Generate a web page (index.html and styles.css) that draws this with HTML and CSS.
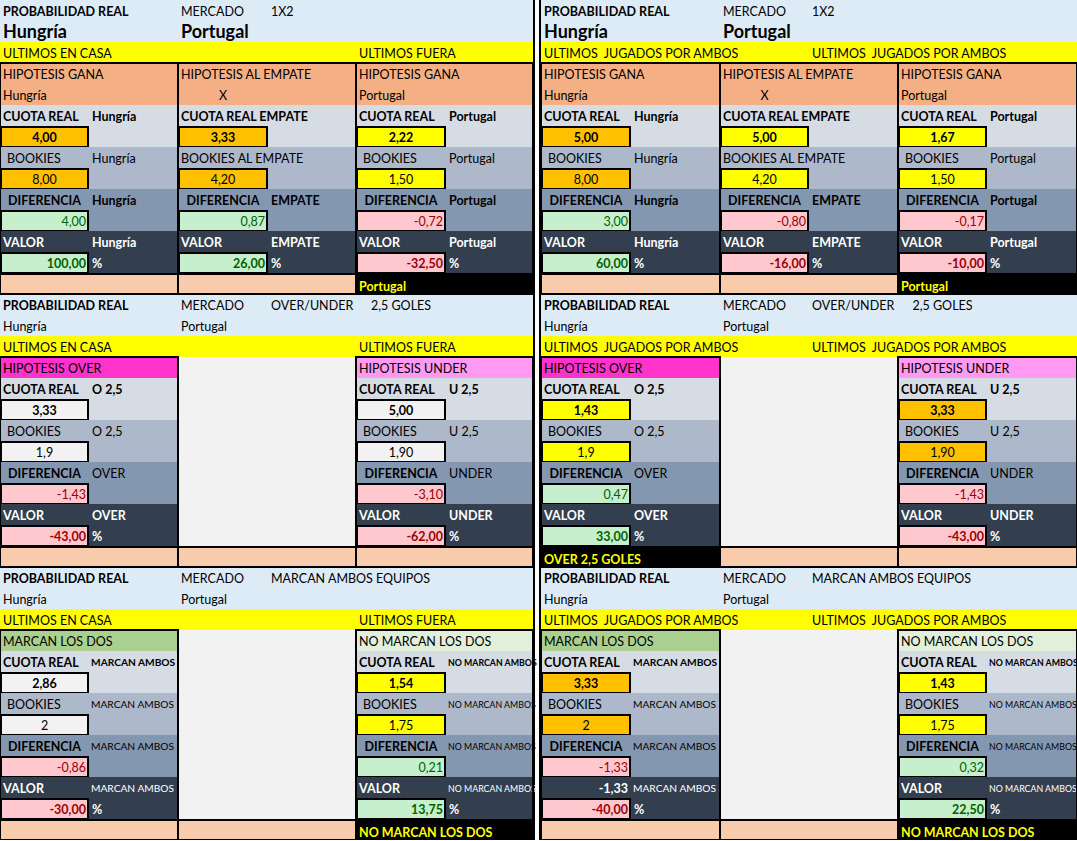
FILE: index.html
```html
<!DOCTYPE html>
<html lang="es">
<head>
<meta charset="utf-8">
<title>Probabilidad real</title>
<link rel="stylesheet" href="styles.css">
</head>
<body>
<div class="sheet">
<div class="half left">

<section class="sec">
<div class="line hdr"><span class="ca b">PROBABILIDAD REAL</span><span class="cc">MERCADO</span><span class="cd">1X2</span></div>
<div class="line hdr"><span class="ca big">Hungría</span><span class="cc big">Portugal</span></div>
<div class="line ylw"><span class="ca">ULTIMOS EN CASA</span><span class="ce">ULTIMOS FUERA</span></div>
<div class="blocks">
<div class="blk k1">
<div class="r hip"><span>HIPOTESIS GANA</span><span></span></div>
<div class="r hip"><span>Hungría</span><span></span></div>
<div class="r cu"><span class="b">CUOTA REAL</span><span class="b">Hungría</span></div>
<div class="r cu"><span class="box org b ctr">4,00</span><span></span></div>
<div class="r bk"><span class="ind">BOOKIES</span><span>Hungría</span></div>
<div class="r bk"><span class="box org ctr">8,00</span><span></span></div>
<div class="r df"><span class="b ctr">DIFERENCIA</span><span class="b">Hungría</span></div>
<div class="r df"><span class="box good rt">4,00</span><span></span></div>
<div class="r vl"><span class="b">VALOR</span><span class="b">Hungría</span></div>
<div class="r vl"><span class="box good rt b">100,00</span><span class="b">%</span></div>
<div class="r res"></div>
</div>
<div class="blk k2">
<div class="r hip"><span>HIPOTESIS AL EMPATE</span><span></span></div>
<div class="r hip"><span class="ctr">X</span><span></span></div>
<div class="r cu"><span class="b">CUOTA REAL EMPATE</span><span></span></div>
<div class="r cu"><span class="box org b ctr">3,33</span><span></span></div>
<div class="r bk"><span>BOOKIES AL EMPATE</span><span></span></div>
<div class="r bk"><span class="box org ctr">4,20</span><span></span></div>
<div class="r df"><span class="b ctr">DIFERENCIA</span><span class="b">EMPATE</span></div>
<div class="r df"><span class="box good rt">0,87</span><span></span></div>
<div class="r vl"><span class="b">VALOR</span><span class="b">EMPATE</span></div>
<div class="r vl"><span class="box good rt b">26,00</span><span class="b">%</span></div>
<div class="r res"></div>
</div>
<div class="blk k3">
<div class="r hip"><span>HIPOTESIS GANA</span><span></span></div>
<div class="r hip"><span>Portugal</span><span></span></div>
<div class="r cu"><span class="b">CUOTA REAL</span><span class="b">Portugal</span></div>
<div class="r cu"><span class="box yel b ctr">2,22</span><span></span></div>
<div class="r bk"><span class="ind">BOOKIES</span><span>Portugal</span></div>
<div class="r bk"><span class="box yel ctr">1,50</span><span></span></div>
<div class="r df"><span class="b ctr">DIFERENCIA</span><span class="b">Portugal</span></div>
<div class="r df"><span class="box bad rt">-0,72</span><span></span></div>
<div class="r vl"><span class="b">VALOR</span><span class="b">Portugal</span></div>
<div class="r vl"><span class="box bad rt b">-32,50</span><span class="b">%</span></div>
<div class="r win"><span class="b">Portugal</span><span></span></div>
</div>
</div>
</section>

<section class="sec">
<div class="line hdr"><span class="ca b">PROBABILIDAD REAL</span><span class="cc">MERCADO</span><span class="cd">OVER/UNDER</span><span class="ce ctr">2,5 GOLES</span></div>
<div class="line hdr"><span class="ca">Hungría</span><span class="cc">Portugal</span></div>
<div class="line ylw"><span class="ca">ULTIMOS EN CASA</span><span class="ce">ULTIMOS FUERA</span></div>
<div class="blocks">
<div class="blk k1">
<div class="r ov"><span>HIPOTESIS OVER</span><span></span></div>
<div class="r cu"><span class="b">CUOTA REAL</span><span class="b">O 2,5</span></div>
<div class="r cu"><span class="box wht b ctr">3,33</span><span></span></div>
<div class="r bk"><span class="ind">BOOKIES</span><span>O 2,5</span></div>
<div class="r bk"><span class="box wht ctr">1,9</span><span></span></div>
<div class="r df"><span class="b ctr">DIFERENCIA</span><span>OVER</span></div>
<div class="r df"><span class="box bad rt">-1,43</span><span></span></div>
<div class="r vl"><span class="b">VALOR</span><span class="b">OVER</span></div>
<div class="r vl"><span class="box bad rt b">-43,00</span><span class="b">%</span></div>
<div class="r res"></div>
</div>
<div class="blk k2 open">
<div class="fill"></div>
<div class="r res"></div>
</div>
<div class="blk k3">
<div class="r un"><span>HIPOTESIS UNDER</span><span></span></div>
<div class="r cu"><span class="b">CUOTA REAL</span><span class="b">U 2,5</span></div>
<div class="r cu"><span class="box wht b ctr">5,00</span><span></span></div>
<div class="r bk"><span class="ind">BOOKIES</span><span>U 2,5</span></div>
<div class="r bk"><span class="box wht ctr">1,90</span><span></span></div>
<div class="r df"><span class="b ctr">DIFERENCIA</span><span>UNDER</span></div>
<div class="r df"><span class="box bad rt">-3,10</span><span></span></div>
<div class="r vl"><span class="b">VALOR</span><span class="b">UNDER</span></div>
<div class="r vl"><span class="box bad rt b">-62,00</span><span class="b">%</span></div>
<div class="r res"></div>
</div>
</div>
</section>

<section class="sec">
<div class="line hdr"><span class="ca b">PROBABILIDAD REAL</span><span class="cc">MERCADO</span><span class="cd">MARCAN AMBOS EQUIPOS</span></div>
<div class="line hdr"><span class="ca">Hungría</span><span class="cc">Portugal</span></div>
<div class="line ylw"><span class="ca">ULTIMOS EN CASA</span><span class="ce">ULTIMOS FUERA</span></div>
<div class="blocks">
<div class="blk k1">
<div class="r mar"><span>MARCAN LOS DOS</span><span></span></div>
<div class="r cu"><span class="b">CUOTA REAL</span><span class="b sm">MARCAN AMBOS</span></div>
<div class="r cu"><span class="box wht b ctr">2,86</span><span></span></div>
<div class="r bk"><span class="ind">BOOKIES</span><span class="sm">MARCAN AMBOS</span></div>
<div class="r bk"><span class="box wht ctr">2</span><span></span></div>
<div class="r df"><span class="b ctr">DIFERENCIA</span><span class="sm">MARCAN AMBOS</span></div>
<div class="r df"><span class="box bad rt">-0,86</span><span></span></div>
<div class="r vl"><span class="b">VALOR</span><span class="sm">MARCAN AMBOS</span></div>
<div class="r vl"><span class="box bad rt b">-30,00</span><span class="b">%</span></div>
<div class="r res"></div>
</div>
<div class="blk k2 open">
<div class="fill"></div>
<div class="r res"></div>
</div>
<div class="blk k3">
<div class="r nomar"><span>NO MARCAN LOS DOS</span><span></span></div>
<div class="r cu"><span class="b">CUOTA REAL</span><span class="b xs">NO MARCAN AMBOS</span></div>
<div class="r cu"><span class="box yel b ctr">1,54</span><span></span></div>
<div class="r bk"><span class="ind">BOOKIES</span><span class="xs">NO MARCAN AMBOS</span></div>
<div class="r bk"><span class="box yel ctr">1,75</span><span></span></div>
<div class="r df"><span class="b ctr">DIFERENCIA</span><span class="xs">NO MARCAN AMBOS</span></div>
<div class="r df"><span class="box good rt">0,21</span><span></span></div>
<div class="r vl"><span class="b">VALOR</span><span class="xs">NO MARCAN AMBOS</span></div>
<div class="r vl"><span class="box good rt b">13,75</span><span class="b">%</span></div>
<div class="r win"><span class="b">NO MARCAN LOS DOS</span><span></span></div>
</div>
</div>
</section>

</div>
<div class="sep"></div>
<div class="half right">

<section class="sec">
<div class="line hdr"><span class="ca b">PROBABILIDAD REAL</span><span class="cc">MERCADO</span><span class="cd">1X2</span></div>
<div class="line hdr"><span class="ca big">Hungría</span><span class="cc big">Portugal</span></div>
<div class="line ylw"><span class="ca">ULTIMOS  JUGADOS POR AMBOS</span><span class="cd">ULTIMOS  JUGADOS POR AMBOS</span></div>
<div class="blocks">
<div class="blk k1">
<div class="r hip"><span>HIPOTESIS GANA</span><span></span></div>
<div class="r hip"><span>Hungría</span><span></span></div>
<div class="r cu"><span class="b">CUOTA REAL</span><span class="b">Hungría</span></div>
<div class="r cu"><span class="box org b ctr">5,00</span><span></span></div>
<div class="r bk"><span class="ind">BOOKIES</span><span>Hungría</span></div>
<div class="r bk"><span class="box org ctr">8,00</span><span></span></div>
<div class="r df"><span class="b ctr">DIFERENCIA</span><span class="b">Hungría</span></div>
<div class="r df"><span class="box good rt">3,00</span><span></span></div>
<div class="r vl"><span class="b">VALOR</span><span class="b">Hungría</span></div>
<div class="r vl"><span class="box good rt b">60,00</span><span class="b">%</span></div>
<div class="r res"></div>
</div>
<div class="blk k2">
<div class="r hip"><span>HIPOTESIS AL EMPATE</span><span></span></div>
<div class="r hip"><span class="ctr">X</span><span></span></div>
<div class="r cu"><span class="b">CUOTA REAL EMPATE</span><span></span></div>
<div class="r cu"><span class="box yel b ctr">5,00</span><span></span></div>
<div class="r bk"><span>BOOKIES AL EMPATE</span><span></span></div>
<div class="r bk"><span class="box yel ctr">4,20</span><span></span></div>
<div class="r df"><span class="b ctr">DIFERENCIA</span><span class="b">EMPATE</span></div>
<div class="r df"><span class="box bad rt">-0,80</span><span></span></div>
<div class="r vl"><span class="b">VALOR</span><span class="b">EMPATE</span></div>
<div class="r vl"><span class="box bad rt b">-16,00</span><span class="b">%</span></div>
<div class="r res"></div>
</div>
<div class="blk k3">
<div class="r hip"><span>HIPOTESIS GANA</span><span></span></div>
<div class="r hip"><span>Portugal</span><span></span></div>
<div class="r cu"><span class="b">CUOTA REAL</span><span class="b">Portugal</span></div>
<div class="r cu"><span class="box yel b ctr">1,67</span><span></span></div>
<div class="r bk"><span class="ind">BOOKIES</span><span>Portugal</span></div>
<div class="r bk"><span class="box yel ctr">1,50</span><span></span></div>
<div class="r df"><span class="b ctr">DIFERENCIA</span><span class="b">Portugal</span></div>
<div class="r df"><span class="box bad rt">-0,17</span><span></span></div>
<div class="r vl"><span class="b">VALOR</span><span class="b">Portugal</span></div>
<div class="r vl"><span class="box bad rt b">-10,00</span><span class="b">%</span></div>
<div class="r win"><span class="b">Portugal</span><span></span></div>
</div>
</div>
</section>

<section class="sec">
<div class="line hdr"><span class="ca b">PROBABILIDAD REAL</span><span class="cc">MERCADO</span><span class="cd">OVER/UNDER</span><span class="ce ctr">2,5 GOLES</span></div>
<div class="line hdr"><span class="ca">Hungría</span><span class="cc">Portugal</span></div>
<div class="line ylw"><span class="ca">ULTIMOS  JUGADOS POR AMBOS</span><span class="cd">ULTIMOS  JUGADOS POR AMBOS</span></div>
<div class="blocks">
<div class="blk k1">
<div class="r ov"><span>HIPOTESIS OVER</span><span></span></div>
<div class="r cu"><span class="b">CUOTA REAL</span><span class="b">O 2,5</span></div>
<div class="r cu"><span class="box yel b ctr">1,43</span><span></span></div>
<div class="r bk"><span class="ind">BOOKIES</span><span>O 2,5</span></div>
<div class="r bk"><span class="box yel ctr">1,9</span><span></span></div>
<div class="r df"><span class="b ctr">DIFERENCIA</span><span>OVER</span></div>
<div class="r df"><span class="box good rt">0,47</span><span></span></div>
<div class="r vl"><span class="b">VALOR</span><span class="b">OVER</span></div>
<div class="r vl"><span class="box good rt b">33,00</span><span class="b">%</span></div>
<div class="r win"><span class="b">OVER 2,5 GOLES</span><span></span></div>
</div>
<div class="blk k2 open">
<div class="fill"></div>
<div class="r res"></div>
</div>
<div class="blk k3">
<div class="r un"><span>HIPOTESIS UNDER</span><span></span></div>
<div class="r cu"><span class="b">CUOTA REAL</span><span class="b">U 2,5</span></div>
<div class="r cu"><span class="box org b ctr">3,33</span><span></span></div>
<div class="r bk"><span class="ind">BOOKIES</span><span>U 2,5</span></div>
<div class="r bk"><span class="box org ctr">1,90</span><span></span></div>
<div class="r df"><span class="b ctr">DIFERENCIA</span><span>UNDER</span></div>
<div class="r df"><span class="box bad rt">-1,43</span><span></span></div>
<div class="r vl"><span class="b">VALOR</span><span class="b">UNDER</span></div>
<div class="r vl"><span class="box bad rt b">-43,00</span><span class="b">%</span></div>
<div class="r res"></div>
</div>
</div>
</section>

<section class="sec">
<div class="line hdr"><span class="ca b">PROBABILIDAD REAL</span><span class="cc">MERCADO</span><span class="cd">MARCAN AMBOS EQUIPOS</span></div>
<div class="line hdr"><span class="ca">Hungría</span><span class="cc">Portugal</span></div>
<div class="line ylw"><span class="ca">ULTIMOS  JUGADOS POR AMBOS</span><span class="cd">ULTIMOS  JUGADOS POR AMBOS</span></div>
<div class="blocks">
<div class="blk k1">
<div class="r mar"><span>MARCAN LOS DOS</span><span></span></div>
<div class="r cu"><span class="b">CUOTA REAL</span><span class="b sm">MARCAN AMBOS</span></div>
<div class="r cu"><span class="box org b ctr">3,33</span><span></span></div>
<div class="r bk"><span class="ind">BOOKIES</span><span class="sm">MARCAN AMBOS</span></div>
<div class="r bk"><span class="box org ctr">2</span><span></span></div>
<div class="r df"><span class="b ctr">DIFERENCIA</span><span class="sm">MARCAN AMBOS</span></div>
<div class="r df"><span class="box bad rt">-1,33</span><span></span></div>
<div class="r vl"><span class="b rt">-1,33</span><span class="sm">MARCAN AMBOS</span></div>
<div class="r vl"><span class="box bad rt b">-40,00</span><span class="b">%</span></div>
<div class="r res"></div>
</div>
<div class="blk k2 open">
<div class="fill"></div>
<div class="r res"></div>
</div>
<div class="blk k3">
<div class="r nomar"><span>NO MARCAN LOS DOS</span><span></span></div>
<div class="r cu"><span class="b">CUOTA REAL</span><span class="b xs">NO MARCAN AMBOS</span></div>
<div class="r cu"><span class="box yel b ctr">1,43</span><span></span></div>
<div class="r bk"><span class="ind">BOOKIES</span><span class="xs">NO MARCAN AMBOS</span></div>
<div class="r bk"><span class="box yel ctr">1,75</span><span></span></div>
<div class="r df"><span class="b ctr">DIFERENCIA</span><span class="xs">NO MARCAN AMBOS</span></div>
<div class="r df"><span class="box good rt">0,32</span><span></span></div>
<div class="r vl"><span class="b">VALOR</span><span class="xs">NO MARCAN AMBOS</span></div>
<div class="r vl"><span class="box good rt b">22,50</span><span class="b">%</span></div>
<div class="r win"><span class="b">NO MARCAN LOS DOS</span><span></span></div>
</div>
</div>
</section>

</div>
</div>
</body>
</html>
```

FILE: styles.css
```css
* { box-sizing: border-box; }

body {
  margin: 0;
  background: #ffffff;
  color: #000000;
  font-family: Lato, "Liberation Sans", sans-serif;
  font-size: 12.5px;
}

.sheet {
  display: flex;
  width: 1077px;
  height: 840px;
  overflow: hidden;
}

.half {
  display: flex;
  flex-direction: column;
}

.left {
  width: 533px;
  --cols: 89px 89px 90px 88px 90px 87px;
  --blk: 178px 178px 177px;
}

.right {
  width: 536px;
  --cols: 90px 89px 89px 89px 89px 90px;
  --blk: 179px 178px 179px;
}

.left .k1 { --c: 89px 89px; }
.left .k2 { --c: 90px 88px; }
.left .k3 { --c: 90px 87px; }
.right .k1 { --c: 90px 89px; }
.right .k2 { --c: 89px 89px; }
.right .k3 { --c: 89px 90px; }

.sep {
  width: 8px;
  flex: none;
  background: #ffffff;
  border-left: 2px solid #000000;
  border-right: 2px solid #000000;
}

.line {
  display: grid;
  grid-template-columns: var(--cols);
  height: 21px;
  line-height: 21px;
}

.line > span {
  grid-row: 1;
  padding: 1px 3px 0;
  white-space: pre;
  min-width: 0;
}

.ca { grid-column: 1; }
.cc { grid-column: 3; }
.cd { grid-column: 4; }
.ce { grid-column: 5; }

.hdr { background: #DDEBF7; }
.ylw { background: #FFFF00; }

.line > span.big {
  font-size: 18px;
  font-weight: 700;
  padding-top: 0;
}

.blocks {
  display: grid;
  grid-template-columns: var(--blk);
}

.blk {
  position: relative;
  display: flex;
  flex-direction: column;
}

.blk::after {
  content: "";
  position: absolute;
  top: -1px;
  left: -1px;
  right: -1px;
  bottom: -1px;
  border: 2px solid #000000;
  pointer-events: none;
  z-index: 1;
}

.blk.open::after {
  top: 0;
  border-top-width: 0;
}

.fill {
  height: 189px;
  background: #F2F2F2;
}

.r {
  display: grid;
  grid-template-columns: var(--c);
  height: 21px;
  line-height: 21px;
}

.r > span {
  padding: 1px 3px 0;
  white-space: pre;
  min-width: 0;
}

.b { font-weight: 700; }
.ctr { text-align: center; }
.rt { text-align: right; }
.r > span.ind { padding-left: 7px; }
.r > span.sm { font-size: 10.2px; padding-left: 2px; padding-right: 0; }
.r > span.xs { font-size: 8.8px; padding-left: 2px; padding-right: 0; }

.hip { background: #F4B084; }
.ov { background: #FF33CC; }
.un { background: #FF99F2; }
.mar { background: #A9D08E; }
.nomar { background: #E2EFDA; }
.cu { background: #D6DCE4; }
.bk { background: #ADB9CA; }
.df { background: #8497B0; }
.vl { background: #333F4F; color: #ffffff; }
.res { background: #F8CBAD; border-top: 2px solid #000000; }
.win { background: #000000; color: #FFFF00; border-top: 2px solid #000000; }

.box {
  outline: 2px solid #000000;
  outline-offset: -2px;
}

.org { background: #FFC000; }
.yel { background: #FFFF00; }
.wht { background: #F2F2F2; }
.good { background: #C6EFCE; color: #006100; }
.bad { background: #FFC7CE; color: #9C0006; }
```
